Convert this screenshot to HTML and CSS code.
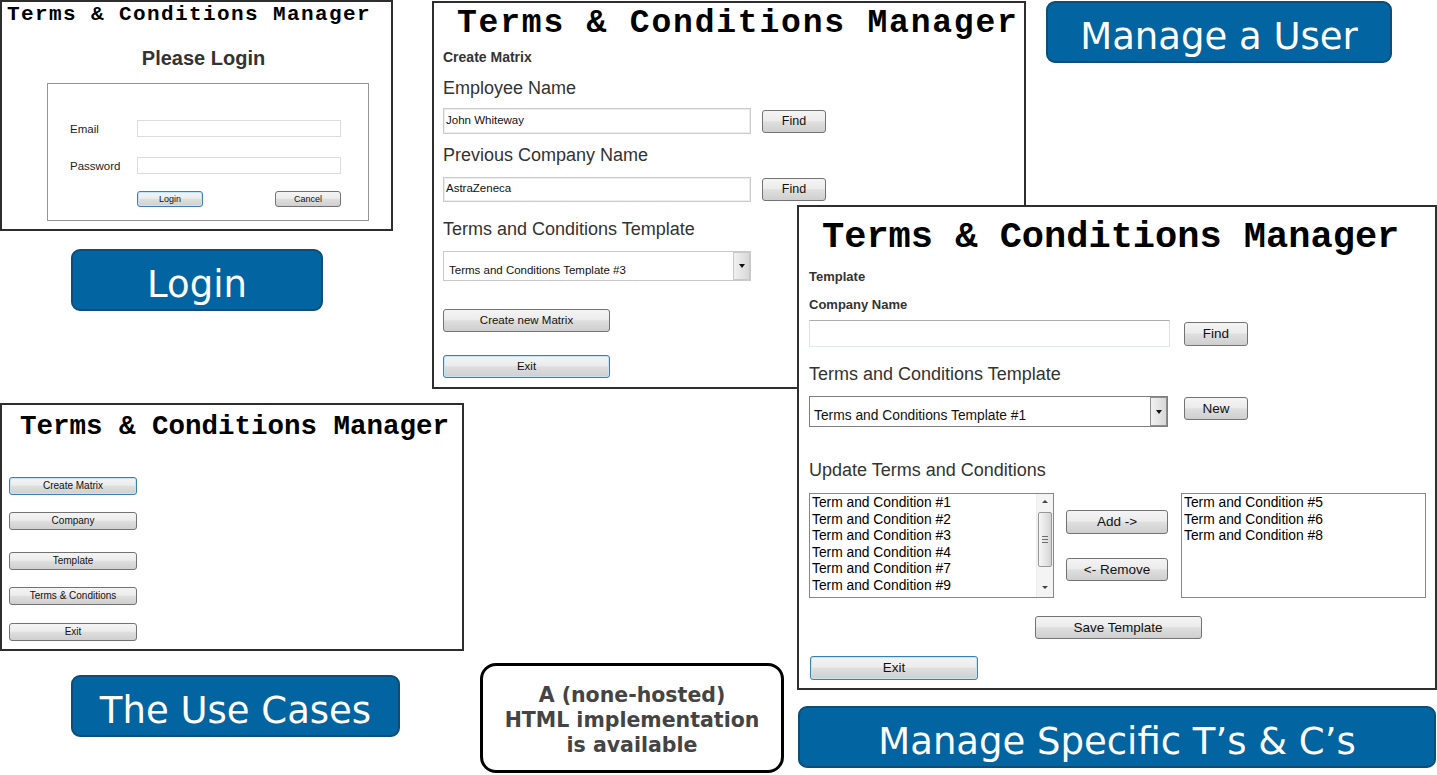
FILE: index.html
```html
<!DOCTYPE html>
<html lang="en">
<head>
<meta charset="utf-8">
<title>Terms &amp; Conditions Manager – Use Cases</title>
<link rel="stylesheet" href="styles.css">
</head>
<body>
<main class="canvas">

  <!-- Login window -->
  <section class="win win-login">
    <h1 class="app-title">Terms &amp; Conditions Manager</h1>
    <h2 class="login-heading">Please Login</h2>
    <div class="login-box">
      <div class="login-row">
        <span class="login-label">Email</span>
        <div class="field field-login"></div>
      </div>
      <div class="login-row login-row-2">
        <span class="login-label">Password</span>
        <div class="field field-login"></div>
      </div>
      <div class="login-actions">
        <button class="btn btn-xs btn-focus">Login</button>
        <button class="btn btn-xs">Cancel</button>
      </div>
    </div>
  </section>

  <!-- Create Matrix window -->
  <section class="win win-matrix">
    <h1 class="app-title">Terms &amp; Conditions Manager</h1>
    <div class="section-label m-section">Create Matrix</div>
    <div class="field-label m-emp">Employee Name</div>
    <div class="m-row m-row-1">
      <div class="field field-m">John Whiteway</div>
      <button class="btn btn-m-find">Find</button>
    </div>
    <div class="field-label m-prev">Previous Company Name</div>
    <div class="m-row m-row-2">
      <div class="field field-m field-m2">AstraZeneca</div>
      <button class="btn btn-m-find">Find</button>
    </div>
    <div class="field-label m-tpl">Terms and Conditions Template</div>
    <div class="select select-m">
      <span class="select-text">Terms and Conditions Template #3</span>
      <span class="select-arrow"><span class="tri-down"></span></span>
    </div>
    <button class="btn btn-m-wide m-create">Create new Matrix</button>
    <button class="btn btn-m-wide btn-focus m-exit">Exit</button>
  </section>

  <!-- Main menu window -->
  <section class="win win-menu">
    <h1 class="app-title">Terms &amp; Conditions Manager</h1>
    <div class="menu-list">
      <button class="btn btn-menu btn-focus">Create Matrix</button>
      <button class="btn btn-menu">Company</button>
      <button class="btn btn-menu menu-gap">Template</button>
      <button class="btn btn-menu">Terms &amp; Conditions</button>
      <button class="btn btn-menu menu-last">Exit</button>
    </div>
  </section>

  <!-- Template window -->
  <section class="win win-template">
    <h1 class="app-title">Terms &amp; Conditions Manager</h1>
    <div class="section-label t-section">Template</div>
    <div class="section-label t-company">Company Name</div>
    <div class="t-row t-row-1">
      <div class="field field-t"></div>
      <button class="btn btn-t-small t-find">Find</button>
    </div>
    <div class="field-label t-tpl">Terms and Conditions Template</div>
    <div class="t-row t-row-2">
      <div class="select select-t">
        <span class="select-text">Terms and Conditions Template #1</span>
        <span class="select-arrow"><span class="tri-down"></span></span>
      </div>
      <button class="btn btn-t-small t-new">New</button>
    </div>
    <div class="field-label t-update">Update Terms and Conditions</div>
    <div class="t-lists">
      <div class="listbox listbox-left">
        <ul class="list-items">
          <li>Term and Condition #1</li>
          <li>Term and Condition #2</li>
          <li>Term and Condition #3</li>
          <li>Term and Condition #4</li>
          <li>Term and Condition #7</li>
          <li>Term and Condition #9</li>
        </ul>
        <div class="scrollbar">
          <span class="tri-up-sm"></span>
          <div class="thumb"><span class="grip"></span></div>
          <span class="tri-down-sm"></span>
        </div>
      </div>
      <div class="t-move">
        <button class="btn btn-t-move t-add">Add -&gt;</button>
        <button class="btn btn-t-move t-remove">&lt;- Remove</button>
      </div>
      <div class="listbox listbox-right">
        <ul class="list-items">
          <li>Term and Condition #5</li>
          <li>Term and Condition #6</li>
          <li>Term and Condition #8</li>
        </ul>
      </div>
    </div>
    <div class="t-save-row">
      <button class="btn btn-t-wide">Save Template</button>
    </div>
    <button class="btn btn-t-wide btn-focus t-exit">Exit</button>
  </section>

  <!-- Labels -->
  <div class="tag tag-login">Login</div>
  <div class="tag tag-user">Manage a User</div>
  <div class="tag tag-cases">The Use Cases</div>
  <div class="tag tag-specific">Manage Specific T’s &amp; C’s</div>

  <div class="note">A (none-hosted)<br>HTML implementation<br>is available</div>
</main>
</body>
</html>
```
FILE: styles.css
```css
* { box-sizing: border-box; margin: 0; padding: 0; }
html, body { background: #fff; }
body {
  width: 1437px;
  height: 775px;
  overflow: hidden;
  font-family: "Liberation Sans", Arial, sans-serif;
  color: #222;
}
.canvas { position: relative; width: 1437px; height: 775px; }

/* ---------- windows ---------- */
.win {
  position: absolute;
  background: #fff;
  border: 2px solid #2e2e2e;
}
.win-login { left: 0; top: 0; width: 393px; height: 231px; }
.win-matrix { left: 432px; top: 1px; width: 594px; height: 388px; padding-left: 9px; }
.win-menu { left: 0; top: 403px; width: 464px; height: 248px; }
.win-template { left: 797px; top: 205px; width: 640px; height: 485px; padding-left: 10px; }

.app-title {
  font-family: "Liberation Mono", "Courier New", monospace;
  font-weight: bold;
  color: #000;
  white-space: nowrap;
}
.win-login .app-title { font-size: 21px; letter-spacing: 1.4px; line-height: 24px; margin: 1px 0 0 5px; }
.win-matrix .app-title { font-size: 33px; letter-spacing: 1.8px; line-height: 38px; margin: 2px 0 -2px 14px; }
.win-menu .app-title { font-size: 27.5px; line-height: 30px; margin: 7px 0 0 18px; }
.win-template .app-title { font-size: 37px; line-height: 40px; margin: 10px 0 -2px 13px; }

/* ---------- generic controls ---------- */
.btn {
  display: flex;
  align-items: center;
  justify-content: center;
  border: 1px solid #737373;
  border-radius: 3px;
  background: linear-gradient(#f4f4f4 0%, #ececec 45%, #dedede 52%, #cfcfcf 100%);
  color: #111;
  font-family: "Liberation Sans", Arial, sans-serif;
  line-height: 1;
  white-space: nowrap;
}
.btn-focus {
  border-color: #3c7fb1;
  box-shadow: inset 0 0 0 1px #c4e5f8;
}
.field {
  background: #fff;
  border: 1px solid #cfcfcf;
  display: flex;
  align-items: center;
  color: #111;
  white-space: nowrap;
}
.select {
  display: flex;
  background: #fff;
  border: 1px solid #bdbdbd;
}
.select-text {
  flex: 1;
  display: flex;
  align-items: flex-end;
  color: #111;
  white-space: nowrap;
}
.select-arrow {
  width: 17px;
  display: flex;
  align-items: center;
  justify-content: center;
  border: 1px solid #8a8a8a;
  background: linear-gradient(90deg, #f1f1f1, #d8d8d8);
}
.tri-down {
  width: 0; height: 0;
  border-left: 3.5px solid transparent;
  border-right: 3.5px solid transparent;
  border-top: 4px solid #111;
}
.section-label { font-weight: bold; color: #333; white-space: nowrap; }
.field-label { font-size: 18px; line-height: 20px; color: #333; white-space: nowrap; }

/* ---------- login window ---------- */
.login-heading {
  font-size: 20px;
  line-height: 24px;
  font-weight: bold;
  color: #333;
  text-align: center;
  padding-left: 14px;
  margin-top: 19px;
}
.login-box {
  margin: 13px 0 0 45px;
  width: 322px;
  height: 138px;
  border: 1px solid #959595;
  padding: 36px 0 0 22px;
}
.login-row { display: flex; align-items: center; height: 17px; }
.login-row-2 { margin-top: 20px; }
.login-label { width: 67px; font-size: 11.5px; color: #222; }
.field-login { width: 204px; height: 17px; border-color: #dcdcdc; }
.login-actions {
  display: flex;
  justify-content: space-between;
  width: 204px;
  margin: 17px 0 0 67px;
}
.btn-xs { width: 66px; height: 16px; font-size: 9px; }

/* ---------- create matrix window ---------- */
.m-section { font-size: 14px; line-height: 16px; margin-top: 8px; }
.m-emp { margin-top: 13px; }
.m-row { display: flex; align-items: center; gap: 11px; height: 26px; margin-top: 10px; }
.m-row-2 { height: 25px; margin-top: 12px; }
.m-prev { margin-top: 11px; }
.m-tpl { margin-top: 17px; }
.field-m {
  width: 308px;
  height: 100%;
  font-size: 11.5px;
  padding: 0 0 3px 2px;
  border-color: #cbcbcb;
  box-shadow: inset 0 0 0 1px #ededed;
}
.btn-m-find { width: 64px; height: 23px; font-size: 12.5px; }
.select-m { width: 308px; height: 30px; margin-top: 12px; border-color: #c9c9c9; }
.select-m .select-text { font-size: 11.5px; padding: 0 0 4px 5px; }
.select-m .select-arrow { border-color: #c9c9c9; }
.btn-m-wide { width: 167px; height: 23px; font-size: 11.5px; }
.m-create { margin-top: 28px; }
.m-exit { margin-top: 23px; }

/* ---------- menu window ---------- */
.menu-list {
  display: flex;
  flex-direction: column;
  gap: 17px;
  margin: 35px 0 0 7px;
}
.btn-menu { width: 128px; height: 18px; font-size: 10px; }
.menu-gap { margin-top: 5px; }
.menu-last { margin-top: 1px; }

/* ---------- template window ---------- */
.t-section { font-size: 13px; line-height: 15px; margin-top: 14px; }
.t-company { font-size: 13px; line-height: 15px; margin-top: 13px; }
.t-row { display: flex; gap: 14px; }
.t-row-1 { align-items: center; height: 27px; margin-top: 8px; }
.t-row-2 { align-items: flex-start; gap: 16px; margin-top: 12px; }
.field-t {
  width: 361px;
  height: 27px;
  border-color: #abadb3 #dbdfe6 #e3e9ef #e2e3ea;
}
.btn-t-small { width: 64px; height: 24px; font-size: 13.5px; }
.t-new { height: 23px; margin-top: 1px; }
.t-tpl { margin-top: 17px; }
.select-t { width: 359px; height: 31px; border-color: #7f7f7f; }
.select-t .select-text { font-size: 13.8px; padding: 0 0 3px 4px; }
.select-t .select-arrow { border-color: #8e8e8e; }
.t-update { margin-top: 33px; }
.t-lists { display: flex; margin-top: 13px; height: 105px; }
.listbox {
  width: 245px;
  height: 105px;
  border: 1px solid #828790;
  background: #fff;
  display: flex;
}
.list-items {
  list-style: none;
  flex: 1;
  font-size: 13.8px;
  line-height: 16.6px;
  color: #000;
  padding: 1px 0 0 2px;
  white-space: nowrap;
}
.scrollbar {
  width: 17px;
  display: flex;
  flex-direction: column;
  align-items: center;
  background: #f4f4f4;
  border-left: 1px solid #ececec;
  padding-top: 6px;
}
.tri-up-sm {
  width: 0; height: 0;
  border-left: 3px solid transparent;
  border-right: 3px solid transparent;
  border-bottom: 3px solid #444;
}
.tri-down-sm {
  width: 0; height: 0;
  border-left: 3px solid transparent;
  border-right: 3px solid transparent;
  border-top: 3px solid #444;
  margin-top: 19px;
}
.thumb {
  width: 14px;
  height: 55px;
  margin-top: 9px;
  border: 1px solid #979797;
  border-radius: 2px;
  background: linear-gradient(90deg, #f6f6f6, #e3e3e3 60%, #d3d3d3);
  display: flex;
  align-items: center;
  justify-content: center;
}
.grip {
  width: 6px;
  height: 7px;
  background: repeating-linear-gradient(#6d6d6d 0 1px, transparent 1px 3px);
}
.t-move {
  width: 102px;
  margin: 0 13px 0 12px;
  padding-top: 17px;
  display: flex;
  flex-direction: column;
  gap: 24px;
}
.btn-t-move { width: 102px; height: 24px; font-size: 13.5px; }
.t-remove { height: 23px; }
.t-save-row { display: flex; justify-content: center; margin-top: 18px; padding-right: 8px; }
.btn-t-wide { width: 167px; height: 23px; font-size: 13.5px; }
.t-exit { margin: 17px 0 0 1px; height: 24px; width: 168px; }

/* ---------- labels ---------- */
.tag {
  position: absolute;
  display: flex;
  align-items: center;
  justify-content: center;
  padding-top: 8px;
  background: #0265a1;
  border: 2px solid #0c4e79;
  border-radius: 9px;
  color: #fff;
  font-family: "DejaVu Sans", Verdana, sans-serif;
  font-size: 37px;
  line-height: 37px;
  white-space: nowrap;
}
.tag-login { left: 71px; top: 249px; width: 252px; height: 62px; }
.tag-user { left: 1046px; top: 1px; width: 346px; height: 62px; }
.tag-cases { left: 71px; top: 675px; width: 329px; height: 62px; }
.tag-specific { left: 798px; top: 706px; width: 638px; height: 62px; }

.note {
  position: absolute;
  left: 480px;
  top: 663px;
  width: 304px;
  height: 110px;
  border: 3px solid #000;
  border-radius: 16px;
  background: #fff;
  display: flex;
  align-items: center;
  justify-content: center;
  text-align: center;
  font-family: "DejaVu Sans", Verdana, sans-serif;
  font-weight: bold;
  font-size: 20.5px;
  line-height: 25px;
  color: #444;
  padding-top: 4px;
}
```
